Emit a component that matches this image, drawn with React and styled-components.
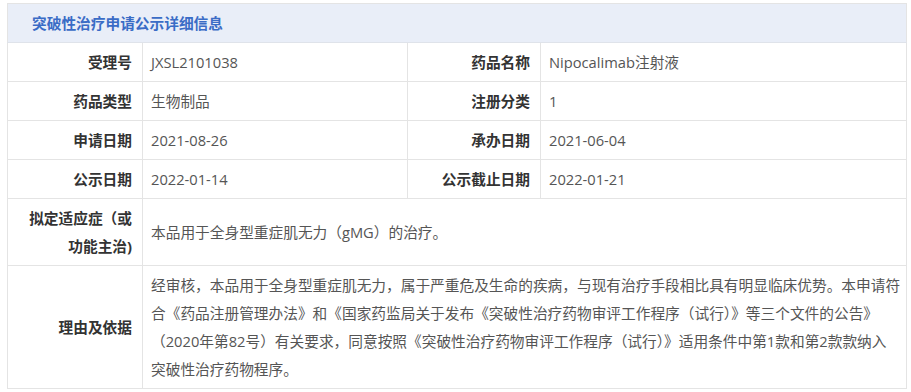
import React from "react";
import styled, { createGlobalStyle } from "styled-components";

const Global = createGlobalStyle`
  html, body { margin: 0; padding: 0; background: #fff; }
  body { font-family: "Open Sans", "Noto Sans CJK SC", sans-serif; }
`;

const Page = styled.div`
  padding: 3px 5px 4px 7px;
`;

const Table = styled.table`
  width: 899px;
  table-layout: fixed;
  border-collapse: collapse;
  border: 1px solid #e4e4e4;
  font-size: 14.7px;
  line-height: 28px;
`;

const HeadCell = styled.th`
  height: 38px;
  padding: 0 0 0 24px;
  background: #e9eef8;
  color: #3a6cc6;
  font-weight: 700;
  text-align: left;
  border-bottom: 1px solid #dfe3ea;
`;

const Label = styled.th`
  padding: 5px 10px;
  text-align: right;
  vertical-align: middle;
  font-weight: 700;
  color: #333;
  border: 1px solid #e4e4e4;
`;

const Value = styled.td`
  padding: 5px 3px 5px 8px;
  text-align: left;
  vertical-align: middle;
  color: #555;
  border: 1px solid #e4e4e4;
`;

const rows = [
  ["受理号", "JXSL2101038", "药品名称", "Nipocalimab注射液"],
  ["药品类型", "生物制品", "注册分类", "1"],
  ["申请日期", "2021-08-26", "承办日期", "2021-06-04"],
  ["公示日期", "2022-01-14", "公示截止日期", "2022-01-21"],
];

export default function App() {
  return (
    <Page>
      <Global />
      <Table>
        <colgroup>
          <col style={{ width: 135 }} />
          <col style={{ width: 265 }} />
          <col style={{ width: 133 }} />
          <col style={{ width: 366 }} />
        </colgroup>
        <tbody>
          <tr>
            <HeadCell colSpan={4}>突破性治疗申请公示详细信息</HeadCell>
          </tr>
          {rows.map((r) => (
            <tr key={r[0]}>
              <Label>{r[0]}</Label>
              <Value>{r[1]}</Value>
              <Label>{r[2]}</Label>
              <Value>{r[3]}</Value>
            </tr>
          ))}
          <tr>
            <Label>拟定适应症（或功能主治)</Label>
            <Value colSpan={3}>本品用于全身型重症肌无力（gMG）的治疗。</Value>
          </tr>
          <tr>
            <Label>理由及依据</Label>
            <Value colSpan={3}>
              经审核，本品用于全身型重症肌无力，属于严重危及生命的疾病，与现有治疗手段相比具有明显临床优势。本申请符合《药品注册管理办法》和《国家药监局关于发布《突破性治疗药物审评工作程序（试行）》等三个文件的公告》（2020年第82号）有关要求，同意按照《突破性治疗药物审评工作程序（试行）》适用条件中第1款和第2款款纳入
              <br />
              突破性治疗药物程序。
            </Value>
          </tr>
        </tbody>
      </Table>
    </Page>
  );
}
